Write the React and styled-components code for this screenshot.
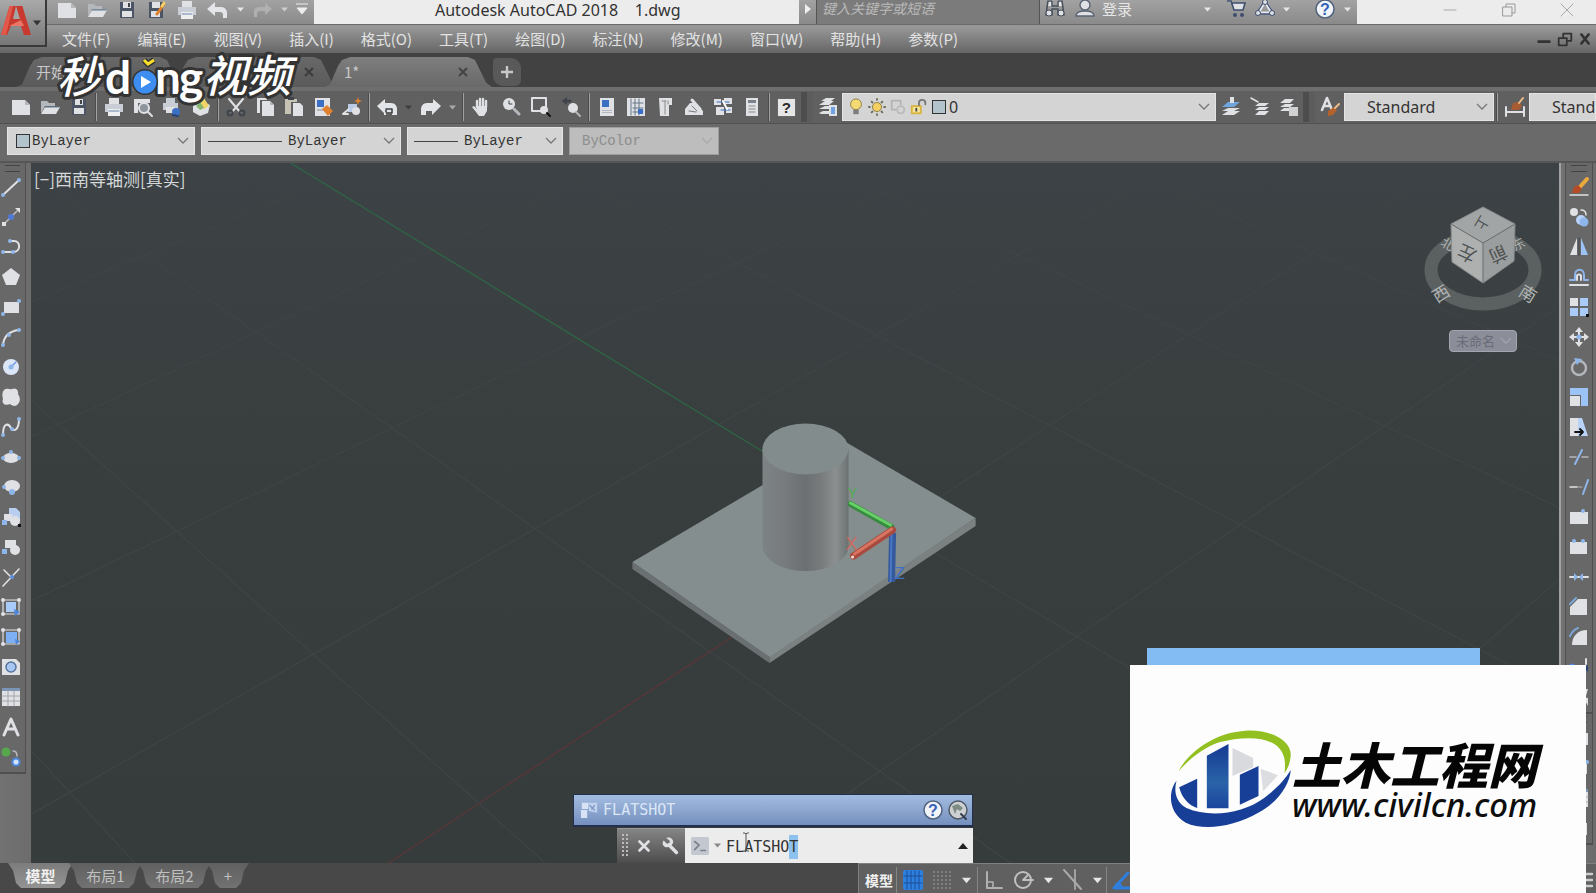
import React, { useEffect, useRef } from 'react';
import styled, { createGlobalStyle } from 'styled-components';

const SANS = '"Noto Sans", "Noto Sans CJK SC", sans-serif';
const CJK = '"Noto Sans CJK SC", sans-serif';
const MONO = '"Liberation Mono", monospace';

const Global = createGlobalStyle`
  * { box-sizing: border-box; }
  body { margin: 0; background: #484848; font-family: ${CJK}; }
  button, input, select { font: inherit; color: inherit; margin: 0; padding: 0; border: 0; background: none; outline: none; }
`;

/* ---------- palette for icons ---------- */
const L = '#dfe1e4';
const G = '#b4b7bb';
const B = '#8fb6ea';
const D = '#3f444b';
const BB = '#3b6fc4';
const O = '#e0812f';
const Y = '#f2d36a';

const S = ({ d, c = L, w = 2, f = 'none' }) => (
  <path d={d} stroke={c} strokeWidth={w} fill={f} strokeLinecap="round" strokeLinejoin="round" />
);
const F = ({ d, c = L }) => <path d={d} fill={c} />;
const Dot = ({ x, y, r = 2, c = B }) => <circle cx={x} cy={y} r={r} fill={c} />;

const ICONS = {
  new: <><F d="M1 3h13l5 5v10H1z" /><F d="M14 3v5h5z" c={G} /></>,
  open: <><F d="M1 4h6l2 2h6v3H5l-4 7z" c={G} /><F d="M5 10h15l-4 7H1z" /><S d="M5 10h14" c="#5f7a94" w={1} /></>,
  save: <><F d="M3 2h14v16H3z" c="#4b5565" /><F d="M6 2h8v6H6z" /><F d="M5 11h10v6H5z" c={L} /><F d="M11 3h2v4h-2z" c={D} /></>,
  saveas: <><F d="M2 2h14v16H2z" c="#4b5565" /><F d="M5 2h8v6H5z" /><F d="M4 11h9v6H4z" /><S d="M17 4l-7 10" c={O} w={3} /><S d="M17 3l-2 3" c={Y} w={3} /></>,
  print: <><F d="M5 1h10v6H5z" /><F d="M1 7h18v8H1z" c="#c9ced6" /><F d="M4 12h12v7H4z" c="#eceef0" /><S d="M5 14h10" c="#6682a8" w={1} /></>,
  preview: <><F d="M1 2h16v4H1zM1 6h4v10H1z" /><circle cx="11" cy="11" r="5" fill="#8e959d" stroke={L} strokeWidth="2" /><S d="M15 15l4 4" /></>,
  publish: <><F d="M4 1h9v5H4zM1 6h15v7H1z" c="#c9ced6" /><F d="M4 10h9v6H4z" /><Dot x={14} y={15} r={4} c={BB} /><S d="M11 18l5 1" c="#24427c" /></>,
  dwf: <><F d="M2 9l8-5 9 4-2 8-8 3-7-4z" /><F d="M7 5l6-4 5 8-5 3z" c={Y} /><F d="M5 9l4-4 4 6-4 2z" c="#86b76d" /></>,
  cut: <><S d="M3 2l11 13M17 2L6 15" c={L} /><S d="M3 2l6 7M17 2l-6 7" c={L} w={1} /><circle cx="4" cy="16" r="2.5" fill="none" stroke={D} strokeWidth="2" /><circle cx="16" cy="16" r="2.5" fill="none" stroke={D} strokeWidth="2" /></>,
  copy: <><F d="M2 1h10v2H5v13H2z" /><F d="M7 4h8l4 4v11H7z" /><F d="M15 4v4h4z" c={G} /></>,
  paste: <><F d="M1 2h12v3H7v12H1z" c="#c6c2b4" /><F d="M4 0h6v3H4z" c={D} /><F d="M9 6h7l3 3v10H9z" /></>,
  match: <><F d="M2 1h15v18H2z" /><F d="M4 3h7v7H4z" c={BB} /><F d="M4 12h11v2H4z" c={G} /><F d="M9 12l5-4 6 6-5 5z" c={O} /></>,
  block: <><F d="M6 7h9v8H6z" c="#b8cae8" /><S d="M1 17l6-5M1 17h5" c={L} /><Dot x={14} y={14} r={4} c={L} /><F d="M16 0l1 3 3 1-3 1-1 3-1-3-3-1 3-1z" c={O} /></>,
  undo: <F d="M8 2v5h6c4 0 6 3 6 6v5h-4v-3c0-2-1-3-3-3H8v4L0 9z" c="#e3e5e8" />,
  undoDark: <><F d="M8 2v4h6c4 0 6 3 6 6v6h-5v-3h-6v3H7v-2L0 9z" c="#e3e5e8" /><S d="M9 12h6M15 12v4M9 13v2" c={D} w={1.6} /></>,
  redo: <F d="M12 2v4H6C1 6 0 10 0 13v5h5v-4h6v4l9-9z" c="#e3e5e8" />,
  redoDim: <F d="M12 3v4H6c-4 0-5 3-5 5v5h3v-3c0-2 1-3 3-3h5v4l7-6z" c="#b0b0b0" />,
  pan: <><S d="M6 10V4M9 9V2M12 9V2M15 10V4" w={2.4} /><F d="M5 9h11v5l-3 5H8l-3-4-4-5 2-1 3 3z" /></>,
  zoomrt: <><circle cx="8" cy="7" r="6" fill={L} /><S d="M8 4v3h3" c={D} w={1} /><S d="M13 12l5 5" c={G} w={3} /></>,
  zoomwin: <><S d="M1 1h14v13H1z" c={L} w={2} /><Dot x={13} y={13} r={4} c={L} /><S d="M16 16l3 3" c="#111" /></>,
  zoomprev: <><S d="M3 4h6" c={D} w={3} /><F d="M1 4l5-4v8z" c={D} /><Dot x={12} y={11} r={5} c={L} /><S d="M15 15l4 4" c={G} /></>,
  props: <><F d="M3 1h14v18H3z" /><F d="M5 3h7v7H5z" c={BB} /><F d="M5 13h10v1H5zM5 15h10v1H5z" c={G} /></>,
  center: <><F d="M1 1h18v18H1z" /><S d="M5 2v16M9 2v16M13 2v16M7 6h10M7 11h10M7 15h10" c="#66758a" w={1} /><F d="M12 12h5v5h-5z" c={BB} /></>,
  palette: <><F d="M4 1h13v7h-3v11H5z" /><S d="M10 4v13M13 4v3M7 4h4" c="#888" w={1} /></>,
  sheet: <><F d="M1 12l5-6h5l8 8v4H1z" /><S d="M8 3l8 9" c={L} w={3} /><S d="M5 14l7 1M8 9l5 5" c="#777" w={1} /></>,
  markup: <><F d="M1 2h7v6H1zM11 1h8v6h-8zM3 10h8v8H3zM13 10h6v6h-6z" /><S d="M4 5h12M8 13h9" c={BB} w={1} /><S d="M10 4l4 8" c="#fff" w={2} /></>,
  calc: <><F d="M4 1h12v18H4z" /><F d="M6 3h8v3H6z" c="#7a828c" /><S d="M7 9h6M7 12h6M7 15h6" c="#888" w={1} /></>,
  layers: <><F d="M1 8l6-4h9l-5 4zM1 12l6-3h9l-5 3z" /><F d="M3 4l5-3h9l-4 3zM1 16l4-2h6v3H3z" /><F d="M11 8h8v11h-8z" c={L} /><F d="M13 10h4v7h-4z" c="#6fa3e4" /></>,
  layerA: <><F d="M1 18l6-4h12l-6 4zM1 14l6-3h12l-6 3z" /><F d="M1 10l6-5h12l-6 5z" c="#6ea5dd" /><F d="M9 0h4v6H9z" /></>,
  layerB: <><F d="M5 9l4-3h10l-4 3zM5 13l4-3h10l-4 3zM5 18l4-4h10l-4 4z" /><S d="M1 1l7 4" c={L} w={1.5} /></>,
  layerC: <><F d="M1 6l5-4h9l-4 4zM1 10l5-3h9l-4 3zM1 14l4-3h7v3z" /><F d="M10 10h9v9h-9z" c="#cfd1d3" /></>,
  textStyle: <><S d="M2 13L7 1l5 12M4 9h6" c={L} w={2.5} /><F d="M8 14l6-4 3 3-4 5-5 1z" c="#b4622c" /><S d="M15 11l4-4" c="#f0bc86" w={2} /></>,
  dimStyle: <><S d="M1 10v9M19 10v9M1 15h18" c={L} w={2} /><F d="M6 13l2-7 6-1 3 4-3 4z" c="#a85a30" /><S d="M14 6l4-5" c="#f0bc86" w={2} /></>,
  bulb: <><circle cx="10" cy="7" r="6" fill="#f4da74" stroke="#8a7a3c" /><F d="M7 13h6v5H7z" c="#7d7d7d" /></>,
  sun: <><circle cx="10" cy="10" r="5" fill="#f4cf62" stroke="#8a7a3c" /><S d="M10 1v1M10 18v1M1 10h1M18 10h1M4 4l1 1M15 15l1 1M4 16l1-1M15 5l1-1" c="#6b6b52" w={2} /></>,
  freeze: <><S d="M3 3h10v4M3 3v10h4" c="#b4b4b4" w={2} /><circle cx="13" cy="13" r="4" fill="none" stroke="#b9b9b9" strokeWidth="2" /></>,
  lock: <><F d="M1 8h12v10H1z" c="#d9b33c" /><F d="M3 10h8v6H3z" c="#f5e59b" /><S d="M10 8V5c0-4 7-4 7 0v2" c="#777" w={2} /><F d="M6 11h2v4H6z" c="#444" /></>,
  binoc: <><F d="M3 1h5v6H3zM12 1h5v6h-5z" c="#e8e8e8" /><S d="M3 2h4v5h6V2h4l2 14h-6v-6H7v6H1z" c="#47505c" w={1.6} /><circle cx="4" cy="14" r="3" fill={L} stroke="#47505c" /><circle cx="16" cy="14" r="3" fill={L} stroke="#47505c" /></>,
  user: <><circle cx="10" cy="6" r="5" fill={L} stroke="#5a6473" strokeWidth="1.4" /><path d="M1 17c0-4 5-5 9-5s9 1 9 5z" fill={L} stroke="#5a6473" strokeWidth="1.4" /></>,
  cart: <><path d="M1 2h4l3 9h9l2-7H6" fill={L} stroke="#3f4e70" strokeWidth="1.6" /><Dot x={9} y={16} c="#3f4e70" /><Dot x={16} y={16} c="#3f4e70" /></>,
  a360: <><path d="M10 2l7 12H3z" fill="none" stroke="#e7ebf2" strokeWidth="3" /><path d="M10 1l9 14H1z" fill="none" stroke="#3f4e70" strokeWidth="1.3" /><circle cx="10" cy="3" r="2.5" fill={L} stroke="#3f4e70" /><circle cx="3" cy="14" r="2.5" fill={L} stroke="#3f4e70" /><circle cx="17" cy="14" r="2.5" fill={L} stroke="#3f4e70" /></>,
  winMin: <S d="M4 10h12" c="#aaa" w={1} />,
  winRestore: <S d="M4 7h9v9H4zM7 7V4h9v9h-3" c="#999" w={1} />,
  winClose: <S d="M4 4l12 12M16 4L4 16" c="#aaa" w={1} />,
  docMin: <S d="M4 13h12" c="#333" w={3} />,
  docRestore: <S d="M3 9h9v8H3zM8 8V4h9v8h-4" c="#333" w={2} />,
  docClose: <S d="M6 5l8 10M14 5L6 15" c="#333" w={3} />,
  line: <><S d="M2 18L18 3" c={L} w={2} /><Dot x={2} y={18} /><Dot x={18} y={3} /></>,
  xline: <><S d="M4 16L16 4" c={G} w={1.6} /><F d="M1 15h4v4H1zM14 1h5v5z" /><Dot x={10} y={10} r={3} c="#4f79d6" /></>,
  pline: <><S d="M2 15h10c8 0 8-11 1-11h-3" c={L} w={2} /><Dot x={2} y={15} /><Dot x={12} y={15} /><Dot x={9} y={4} /></>,
  polygon: <F d="M10 1l9 7-4 10H5L1 8z" />,
  rect: <><F d="M3 5h15v11H3z" /><Dot x={18} y={4} /><Dot x={2} y={17} /></>,
  arc: <><S d="M2 18C3 8 9 4 18 3" c={L} w={2} /><Dot x={2} y={18} /><Dot x={8} y={8} /><Dot x={18} y={3} /></>,
  circle: <><Dot x={10} y={10} r={8} c="#dbe6f8" /><S d="M10 10l5-5" c="#6f9ae0" w={1.5} /><Dot x={10} y={10} r={2.5} c={B} /></>,
  cloud: <F d="M3 3c3-3 6 0 8-1 4-2 7 2 6 5 2 3 3 7 0 10-2 3-6 2-8 0-4 2-9 0-7-5-1-3-1-7 1-9z" />,
  spline: <><S d="M2 18C2 4 8 7 10 11s8 3 8-9" c={L} w={2} /><Dot x={2} y={18} /><Dot x={18} y={2} /><Dot x={11} y={12} /></>,
  ellipse: <><ellipse cx="10" cy="11" rx="8" ry="5" fill={L} /><Dot x={10} y={5} /><Dot x={2} y={11} /><Dot x={18} y={11} /></>,
  ellArc: <><ellipse cx="11" cy="9" rx="8" ry="6" fill={L} /><Dot x={3} y={10} /><Dot x={11} y={15} r={3} /></>,
  insert: <><F d="M8 1h7l4 4v9H8z" c="#b9cdf0" /><F d="M3 7h8v7H3z" /><Dot x={14} y={14} r={5} c={L} /><F d="M1 13h5v5H1z" c={B} /><F d="M17 17h3v3h-3z" c="#111" /></>,
  mkblock: <><F d="M4 3h11v8H4z" /><Dot x={14} y={13} r={5} c={L} /><F d="M1 12h5v5H1z" c={B} /></>,
  point: <><S d="M2 19L18 2M3 3l8 8" c={L} w={1.6} /><Dot x={11} y={10} r={2} c="#5d8de0" /></>,
  hatch: <><S d="M2 3h16v14H2z" c={L} w={1.2} /><F d="M5 5h10v10H5z" c="#a9cbfa" /><Dot x={2} y={3} c={L} /><Dot x={18} y={3} c={L} /><Dot x={2} y={17} c={L} /><F d="M13 12l6 3-5 4z" c="#4f86dd" /></>,
  grad: <><S d="M2 3h16v14H2z" c={L} w={1.2} /><F d="M5 5h11v11H5z" c="#7eb0f5" /><Dot x={2} y={3} c={L} /><Dot x={18} y={3} c={L} /><Dot x={2} y={17} c={L} /><F d="M14 12l5 2-4 4z" c="#4f86dd" /></>,
  region: <><F d="M1 2h14l4 4v12H1z" /><circle cx="10" cy="10" r="5" fill="#a8c6f2" stroke="#55749f" strokeWidth="1.5" /></>,
  table: <><F d="M1 1h18v18H1z" /><F d="M1 1h18v3H1z" c="#7d95b5" /><S d="M7 4v15M13 4v15M1 9h18M1 14h18" c="#a3a6aa" w={1} /></>,
  mtext: <S d="M3 18L10 2l7 16M6 12h8" c={L} w={3} />,
  addsel: <><Dot x={5} y={5} r={4.5} c="#57a84c" /><S d="M12 4c4 0 4 3 4 5" c={G} w={1.6} /><Dot x={15} y={15} r={4.5} c="#4f86dd" /><Dot x={15} y={15} r={2.6} c="#cfe2ff" /></>,
  erase: <><S d="M1 18h18" c={L} w={1.4} /><S d="M18 2l-8 9" c="#e9a93c" w={4} /><F d="M3 16l2-6 4-2 4 4-3 4z" c="#b44b26" /></>,
  copyObj: <><Dot x={5} y={5} r={4} c={L} /><S d="M12 3c4 0 5 2 5 5" c={L} w={1.5} /><Dot x={12} y={13} r={5} c="#b8d2fa" /><Dot x={15} y={15} r={4.5} c={B} /></>,
  mirror: <><F d="M8 1v17H1z" /><F d="M12 1v17h7z" c="#9cc3f5" /><S d="M10 1v18" c={D} w={1} /></>,
  offset: <><S d="M1 13h5V8c0-7 9-7 9 0v5h4" c={B} w={2} /><S d="M1 18h18M8 13V9c0-2 4-2 4 0v4" c={L} w={2} /></>,
  array: <><F d="M1 1h8v8H1z" /><F d="M11 1h8v8h-8zM1 11h8v8H1zM11 11h8v8h-8z" c="#a9cbfa" /><F d="M17 17h3v3h-3z" c="#111" /></>,
  move: <><F d="M10 0l4 5H6zM10 20l4-5H6zM0 10l5-4v8zM20 10l-5-4v8z" /><S d="M10 5v10M5 10h10" c={L} /><Dot x={10} y={10} r={2.5} c={B} /></>,
  rotate: <><circle cx="10" cy="11" r="7" fill="none" stroke={G} strokeWidth="2.4" /><F d="M5 1l8 1-5 6z" c={B} /></>,
  scale: <><F d="M1 1h18v18h-7V8H1z" c="#9cc3f5" /><F d="M1 9h10v10H1z" /></>,
  stretch: <><F d="M1 1h8v18H1z" /><F d="M9 1h4l6 18H9z" c="#b9d3f6" /><S d="M6 15h7M11 12l3 3-3 3" c="#111" w={1.8} /></>,
  trim: <><S d="M1 10h6M13 10h6" c={G} w={1.5} /><S d="M6 17L13 3" c={B} w={2} /></>,
  extend: <><S d="M1 10h7" c={L} w={1.5} /><S d="M9 10h4" c={G} w={1} /><S d="M14 17l5-14" c={B} w={2} /></>,
  breakPt: <><F d="M1 5h18v12H1z" /><Dot x={14} y={4} /></>,
  breakObj: <><F d="M1 5h17v12H1z" /><Dot x={5} y={4} /><Dot x={14} y={4} /></>,
  join: <><S d="M1 10h18" c={L} w={2} /><F d="M5 6l4 4-4 4zM14 6l-4 4 4 4z" c={B} /></>,
  chamfer: <><F d="M9 2h9v16H1v-8z" /><S d="M1 7l6-6" c="#7ba6d8" w={2} /></>,
  fillet: <><F d="M18 3v15H3C3 9 9 3 18 3z" /><S d="M1 9C3 5 6 2 9 1" c="#7ba6d8" w={2} /></>,
  blend: <><S d="M2 8c6 0 7 8 14 5" c="#4f86dd" w={3} /><S d="M17 2v5" c={L} w={2} /><F d="M15 11l4-3v7z" c="#26456f" /></>,
  explode: <><F d="M1 4h7v7H1zM11 2h8l-2 7-6-1zM4 13h7v6H4z" /><F d="M14 10l5 1v8z" c={L} /></>,
  wrench: <><S d="M8 8l9 9" c={L} w={4} /><path d="M2 3l4 4 3-1 0-3-4-3c5-2 9 2 8 6l-3 4-4 1C2 11-1 7 2 3z" fill={L} /></>,
  closeX: <S d="M5 5l10 10M15 5L5 15" c={L} w={3} />,
  prompt: <><rect x="0" y="0" width="20" height="20" rx="2" fill="#c3c7cf" /><S d="M4 5l5 4-5 5M11 15h5" c="#7a7f8a" w={1.8} /></>,
  search: <><circle cx="10" cy="10" r="9" fill="#ccd0d2" stroke="#4d5560" strokeWidth="1.4" /><path d="M4 6l6-2 5 4-3 3-3-2-2 5z" fill="#7e8b83" /><S d="M13 14l5 5" c="#333c48" w={2} /></>,
  flat: <><F d="M2 2h7v7H2zM1 10h7v9H1z" c="#d7e2f4" /><F d="M9 2h10v11l-9-2z" c="#c0d2ef" /><S d="M11 5l5 5M16 5l-3 4" c="#7f97c2" w={1.4} /></>,
  grid: <><rect width="20" height="20" fill="#2d7fe0" rx="2" /><S d="M4 1v18M8 1v18M12 1v18M16 1v18M1 6h18M1 13h18" c="#1c4f96" w={1} /></>,
  snap: <S d="M2 2h.1M6 2h.1M10 2h.1M14 2h.1M18 2h.1M2 6h.1M6 6h.1M10 6h.1M14 6h.1M18 6h.1M2 10h.1M6 10h.1M10 10h.1M14 10h.1M18 10h.1M2 14h.1M6 14h.1M10 14h.1M14 14h.1M18 14h.1M2 18h.1M6 18h.1M10 18h.1M14 18h.1M18 18h.1" c="#a2a2a2" w={1.6} />,
  ortho: <><S d="M3 2v16h15" c="#b0b0b0" w={2} /><S d="M3 12h6v6" c="#b0b0b0" w={1.6} /></>,
  polar: <><circle cx="9" cy="10" r="8" fill="none" stroke="#c0c0c0" strokeWidth="2" /><S d="M9 10h10M9 10l5-5" c="#c0c0c0" w={1.8} /></>,
  iso: <><S d="M1 0l17 19" c="#aaa" w={2} /><S d="M12 0v19" c="#aaa" w={1.8} /></>,
  osnap: <S d="M1 18h18M1 18L15 3M4 14c3 0 4 1 4 4" c="#2d7fe0" w={3} />,
  menu: <S d="M2 4h16M2 10h16M2 16h16" c="#ccc" w={2.4} />,
};

const Svg = styled.svg`
  display: block;
  flex: none;
  width: ${(p) => p.$size || 20}px;
  height: ${(p) => p.$size || 20}px;
  overflow: visible;
`;
const Icon = ({ name, size }) => (
  <Svg viewBox="0 0 20 20" $size={size} aria-hidden="true">{ICONS[name]}</Svg>
);

const Help = ({ size = 20, square }) => (
  <Svg viewBox="0 0 20 20" $size={size} aria-hidden="true">
    {square
      ? <rect x="1" y="1" width="18" height="18" fill="#e6e6e6" />
      : <circle cx="10" cy="10" r="9" fill="#f1f4f8" stroke="#51637e" strokeWidth="1.5" />}
    <text x="10" y="16" textAnchor="middle" fontFamily="Liberation Sans, sans-serif" fontWeight="700" fontSize="16" fill={square ? '#2a2a2a' : '#3563b5'}>?</text>
  </Svg>
);

/* ---------- shell ---------- */
const Shell = styled.div`
  position: relative;
  display: flex;
  flex-direction: column;
  min-height: 100vh;
  overflow: hidden;
  background: #6a6a6a;
`;

const Header = styled.header`
  display: flex;
  height: 53px;
  background: linear-gradient(#a0a0a0 0, #8f8f8f 25px, #999 26px, #666 53px);
`;
const AppButton = styled.button`
  display: flex;
  align-items: center;
  flex: none;
  width: 47px;
  height: 47px;
  background: linear-gradient(#a9a9a9, #777);
  border-right: 2px solid #3a3a3a;
  border-bottom: 2px solid #3a3a3a;
`;
const HeaderRows = styled.div`
  flex: 1;
  min-width: 0;
`;
const TitleRow = styled.div`
  display: flex;
  height: 25px;
  border-bottom: 1px solid #6c6c6c;
  background: linear-gradient(#a2a2a2, #8a8a8a);
`;
const Quick = styled.div`
  display: flex;
  flex: none;
  width: 267px;
  height: 18px;
  padding-left: 5px;
`;
const TitleText = styled.h1`
  flex: 1;
  margin: 0;
  padding-left: 121px;
  background: #ececec;
  color: #333;
  font: 400 16px/20px ${SANS};
  white-space: pre;
`;
const SearchArrow = styled.button`
  display: grid;
  place-items: start center;
  padding-top: 4px;
  width: 17px;
`;
const SearchBox = styled.input`
  width: 224px;
  padding: 0 5px 8px;
  background: #7b7b7b;
  border: solid #555;
  border-width: 0 1px;
  font: italic 14px/18px ${CJK};
  &::placeholder { color: #b9b9b9; opacity: 1; }
`;
const InfoCenter = styled.div`
  display: flex;
  align-items: center;
  width: 317px;
  height: 18px;
  padding-left: 5px;
`;
const SignIn = styled.button`
  display: flex;
  align-items: center;
  gap: 7px;
  margin-left: 10px;
  color: #e6e6e6;
  font: 15px/18px ${CJK};
`;
const Spacer = styled.div`
  flex: ${(p) => (p.$w ? `0 0 ${p.$w}px` : '1')};
`;
const WindowButtons = styled.div`
  display: flex;
  justify-content: space-between;
  width: 239px;
  padding: 0 18px 7px 82px;
  background: #ececec;
`;
const MenuBar = styled.nav`
  display: flex;
  align-items: center;
  gap: 27px;
  height: 28px;
  padding-left: 15px;
  padding-right: 2px;
`;
const MenuItem = styled.button`
  color: #e2e2e2;
  font: 15px/24px ${CJK};
  white-space: nowrap;
`;
const DocButtons = styled.div`
  display: flex;
  gap: 1px;
  margin-left: auto;
`;

const IconButton = styled.button`
  display: grid;
  place-items: center;
  flex: none;
  width: ${(p) => p.$w || 29}px;
  height: ${(p) => p.$h || 'auto'};
`;

/* ---------- file tabs ---------- */
const TabStrip = styled.div`
  display: flex;
  align-items: flex-end;
  height: 34px;
  padding-left: 16px;
  background: #424242;
`;
const FileTab = styled.div`
  display: flex;
  align-items: center;
  justify-content: space-between;
  width: 168px;
  height: 30px;
  margin-right: -14px;
  padding: 0 24px 0 20px;
  color: #c8c8c8;
  background: linear-gradient(${(p) => (p.$active ? '#7e7e7e, #696969' : '#686868, #5a5a5a')});
  clip-path: polygon(0 100%, 6px 92%, 14px 30%, 18px 10%, 26px 0, calc(100% - 24px) 0, calc(100% - 17px) 10%, calc(100% - 6px) 85%, 100% 100%);
  & > button { font: 15px/30px ${CJK}; }
`;
const AddTab = styled.button`
  display: grid;
  place-items: center;
  width: 28px;
  height: 28px;
  margin: 0 0 1px 15px;
  background: #595959;
  border-radius: 4px 10px 6px 10px;
`;

/* ---------- toolbars ---------- */
const ToolRow = styled.div`
  display: flex;
  align-items: center;
  height: 37px;
  padding: 2px 0 2px 6px;
  background: #606060;
  border-top: 4px solid #6e6e6e;
  border-bottom: 1px solid #505050;
`;
const PropRow = styled.div`
  display: flex;
  align-items: flex-start;
  gap: 6px;
  height: 39px;
  padding: 3px 7px;
  background: #6a6a6a;
  border-bottom: 2px solid #565656;
`;
const Sep = styled.span`
  flex: none;
  width: 6px;
  height: 28px;
  border: solid transparent;
  border-width: 0 2px;
  background: linear-gradient(90deg, #4c4c4c 1px, #a0a0a0 1px) padding-box;
`;
const Grip = styled.span`
  flex: none;
  width: ${(p) => p.$w}px;
  height: 30px;
  background: #4d4d4d;
  border-right: 6px solid #5c5c5c;
`;
const ComboBox = styled.label`
  display: flex;
  align-items: center;
  flex: ${(p) => (p.$grow ? '1 1 0' : `0 0 ${p.$w}px`)};
  min-width: 0;
  height: 28px;
  padding: 0 6px 0 ${(p) => p.$pad || 6}px;
  overflow: hidden;
  background: ${(p) => (p.$off ? '#bdbdbd' : '#d4d4d4')};
  border: 1px solid ${(p) => (p.$off ? '#9d9d9d' : '#e4e4e4')};
  color: ${(p) => (p.$off ? '#8e8e8e' : '#333')};
  font: ${(p) => (p.$sans ? `16px/26px ${SANS}` : `14px/26px ${MONO}`)};
`;
const Select = styled.select`
  appearance: none;
  flex: 1 0 ${(p) => p.$min || 20}px;
  opacity: 1;
  &:disabled { color: inherit; opacity: 1; }
`;
const LineSample = styled.span`
  flex: none;
  width: ${(p) => p.$w}px;
  height: 1px;
  margin-right: 6px;
  background: #444;
`;
const Swatch = styled.span`
  flex: none;
  width: 14px;
  height: 14px;
  margin: 0 ${(p) => p.$gap || 2}px;
  background: #b3c3cc;
  border: 1px solid #333;
`;
const LayerState = styled.span`
  display: flex;
  flex: none;
  gap: 3px;
  margin-right: 1px;
`;
const Chevron = ({ c = '#888' }) => (
  <Svg viewBox="0 0 10 10" $size={10} aria-hidden="true"><path d="M0 2l5 5 5-5" fill="none" stroke={c} strokeWidth="1.3" /></Svg>
);
const Tri = ({ c = '#e8e8e8', up, size = 9 }) => (
  <Svg viewBox="0 0 10 10" $size={size} aria-hidden="true"><path d={up ? 'M0 8h10L5 2z' : 'M0 2h10L5 8z'} fill={c} /></Svg>
);

const Combo = ({ label, value, children, arrow = true, min, ...rest }) => (
  <ComboBox {...rest}>
    {children}
    <Select aria-label={label} defaultValue={value} disabled={rest.$off} $min={min}>
      <option>{value}</option>
    </Select>
    {arrow && <Chevron c={rest.$off ? '#aaa' : '#777'} />}
  </ComboBox>
);

/* ---------- work area ---------- */
const Work = styled.main`
  display: flex;
  flex: 1;
  min-height: 0;
`;
const Dock = styled.aside`
  flex: none;
  width: ${(p) => (p.$right ? 35 : 31)}px;
  padding: 0 ${(p) => (p.$right ? '3px 0 4px' : '5px 0 0')};
  background: linear-gradient(90deg, #727272, #6c6c6c);
`;
const DockBar = styled.div`
  display: flex;
  flex-direction: column;
  background: #686868;
  border: solid #505050;
  border-width: 0 1px 2px ${(p) => (p.$right ? 1 : 0)}px;
  &::before {
    content: '';
    height: 5px;
    margin: 2px 5px 0;
    border: solid #444;
    border-width: 1px 0;
  }
`;
const Viewport = styled.section`
  position: relative;
  flex: 1;
  min-width: 0;
  background: linear-gradient(#3d4246, #383d3d 45%, #363b3b);
  border-right: 2px solid #a2a2a4;
`;
const Scene = styled.svg`
  position: absolute;
  inset: 0;
  width: 100%;
  height: 100%;
`;
const ViewLabel = styled.button`
  position: relative;
  margin: 4px 0 0 3px;
  color: #d4d8d8;
  font: 17px/24px ${CJK};
`;
const CubeBox = styled.div`
  position: absolute;
  top: 36px;
  right: 13px;
  display: flex;
  flex-direction: column;
  align-items: center;
`;
const UcsButton = styled.button`
  display: flex;
  align-items: center;
  justify-content: space-between;
  width: 68px;
  height: 22px;
  margin-top: 10px;
  padding: 0 5px 0 6px;
  border: 1px solid #a3a5b0;
  border-radius: 4px;
  background: #8b8d99;
  color: #696c78;
  font: 13px/18px ${CJK};
`;

const Command = styled.div`
  position: absolute;
  left: 36%;
  bottom: 0;
  width: 400px;
  margin-left: -8px;
`;
const Suggestion = styled.div`
  display: flex;
  align-items: center;
  gap: 5px;
  height: 33px;
  margin-bottom: 1px;
  padding: 0 4px 0 6px;
  border: 1px solid #22304e;
  border-bottom-width: 2px;
  background: linear-gradient(#a3bce0, #7590bf);
  color: #dbe6f5;
  font: 15px/30px "DejaVu Sans Mono", monospace;
`;
const Prompt = styled.div`
  display: flex;
  height: 35px;
  margin-left: 44px;
`;
const PromptTools = styled.div`
  display: flex;
  align-items: center;
  justify-content: space-between;
  width: 68px;
  padding: 0 5px;
  background: linear-gradient(#858585, #4c4c4c);
  border-top: 1px solid #999;
`;
const DragDots = styled.svg`
  width: 6px;
  height: 24px;
`;
const PromptField = styled.div`
  position: relative;
  display: flex;
  align-items: center;
  gap: 5px;
  flex: 1;
  padding: 0 5px 0 6px;
  background: #ececec;
`;
const PromptInput = styled.input`
  flex: 1;
  min-width: 0;
  padding-top: 2px;
  color: #333;
  font: 15px/24px "DejaVu Sans Mono", monospace;
  &::selection { background: #8ec2ee; color: #333; }
`;
const IBeam = styled.svg`
  position: absolute;
  left: 57px;
  top: 4px;
  width: 8px;
  height: 20px;
`;

/* ---------- bottom bar ---------- */
const Bottom = styled.footer`
  display: flex;
  height: 30px;
  background: #484848;
`;
const Layouts = styled.div`
  display: flex;
  flex: 1;
  padding-left: 8px;
`;
const LayoutTab = styled.button`
  flex: none;
  width: ${(p) => p.$w || 73}px;
  height: 25px;
  margin-right: -4px;
  color: ${(p) => (p.$active ? '#f0f0f0' : '#c0c0c0')};
  background: linear-gradient(${(p) => (p.$active ? '#7c7c7c, #949494' : '#606060, #727272')});
  clip-path: polygon(0 0, 100% 0, calc(100% - 5px) 30%, calc(100% - 8px) 80%, calc(100% - 13px) 100%, 13px 100%, 8px 80%, 5px 30%);
  font: ${(p) => (p.$active ? 700 : 400)} 15px/22px ${CJK};
`;
const Status = styled.div`
  display: flex;
  align-items: center;
  width: 738px;
  padding: 3px 0 0 4px;
  background: #606060;
  border-top: 1px solid #808080;
  border-left: 1px solid #808080;
`;
const ModelButton = styled.button`
  width: 32px;
  color: #f0f0f0;
  font: 700 14px/24px ${CJK};
  white-space: nowrap;
`;
const Rule = styled.span`
  width: 1px;
  height: 26px;
  margin: 0 1px;
  background: #858585;
`;

/* ---------- overlays ---------- */
const Watermark = styled.svg`
  position: absolute;
  left: 52px;
  top: 50px;
  width: 250px;
  height: 60px;
  pointer-events: none;
`;
const BlueStrip = styled.div`
  position: absolute;
  right: 116px;
  bottom: 228px;
  width: 333px;
  height: 17px;
  background: #83bbf3;
`;
const BrandCard = styled.div`
  position: absolute;
  right: 10px;
  bottom: 0;
  display: flex;
  align-items: center;
  width: 456px;
  height: 228px;
  padding-left: 41px;
  background: #fdfdfd;
`;
const BrandName = styled.strong`
  display: block;
  color: #050505;
  font: italic 900 49px/52px ${CJK};
  white-space: nowrap;
`;
const BrandUrl = styled.a`
  display: block;
  color: #0d0d0d;
  font: italic 500 33px/32px ${SANS};
  text-decoration: none;
  white-space: nowrap;
`;

const MENUS = ['文件(F)', '编辑(E)', '视图(V)', '插入(I)', '格式(O)', '工具(T)', '绘图(D)', '标注(N)', '修改(M)', '窗口(W)', '帮助(H)', '参数(P)'];
const DRAW = ['line', 'xline', 'pline', 'polygon', 'rect', 'arc', 'circle', 'cloud', 'spline', 'ellipse', 'ellArc', 'insert', 'mkblock', 'point', 'hatch', 'grad', 'region', 'table', 'mtext', 'addsel'];
const MODIFY = ['erase', 'copyObj', 'mirror', 'offset', 'array', 'move', 'rotate', 'scale', 'stretch', 'trim', 'extend', 'breakPt', 'breakObj', 'join', 'chamfer', 'fillet', 'blend', 'explode'];
const ORDER = ['breakPt', 'rect', 'table', 'breakObj'];
const STANDARD = [
  ['new', 'open', 'save'],
  ['print', 'preview', 'publish', 'dwf'],
  ['cut', 'copy', 'paste', 'match', 'block'],
];

const Buttons = ({ names, ...rest }) => names.map((n) => (
  <IconButton key={n} type="button" aria-label={n} {...rest}><Icon name={n} /></IconButton>
));

const GRID_LINES = [
  [31, 302, 370, 163], [31, 437, 620, 163], [31, 601, 945, 163], [31, 814, 1180, 163],
  [840, 562, 1450, 163], [745, 863, 1557, 307], [1200, 893, 1557, 580],
  [15, 163, 1010, 863], [31, 400, 545, 863], [31, 750, 135, 863], [762, 451, 1460, 863],
  [545, 163, 1557, 690], [820, 163, 1557, 507], [1110, 163, 1557, 360],
];

function Model() {
  return (
    <Scene viewBox="31 163 1527 700" preserveAspectRatio="xMidYMid slice" aria-hidden="true">
      <defs>
        <linearGradient id="side">
          <stop offset="0" stopColor="#7d8384" />
          <stop offset=".25" stopColor="#777b7d" />
          <stop offset=".5" stopColor="#6c7072" />
          <stop offset=".68" stopColor="#777b7c" />
          <stop offset=".85" stopColor="#8b8f90" />
          <stop offset=".95" stopColor="#777c7d" />
          <stop offset="1" stopColor="#6a6f70" />
        </linearGradient>
      </defs>
      <g stroke="#404647" strokeWidth="1">
        {GRID_LINES.map(([a, b, c, d]) => <line key={`${a}-${b}-${c}`} x1={a} y1={b} x2={c} y2={d} />)}
      </g>
      <line x1="290" y1="163" x2="763" y2="452" stroke="#2f6546" strokeWidth="1.3" />
      <line x1="733" y1="636" x2="388" y2="863" stroke="#5c3639" strokeWidth="1.2" />
      <polygon points="632,562 769,657 769,663 632,569" fill="#6a7071" />
      <polygon points="769,656 975,518 975,526 769,663" fill="#7b8181" />
      <polygon points="632,562 840,439 975,518 769,657" fill="#848e8e" />
      <path d="M762 449V546a43 25 0 0 0 86 0V449z" fill="url(#side)" />
      <ellipse cx="805" cy="449" rx="43" ry="25.5" fill="#828c8c" />
      <g strokeLinecap="round">
        <line x1="892" y1="533" x2="891" y2="582" stroke="#34599c" strokeWidth="7" strokeLinecap="butt" />
        <line x1="891" y1="533" x2="890" y2="582" stroke="#4a78c4" strokeWidth="2" strokeLinecap="butt" />
        <line x1="850" y1="504" x2="891" y2="527" stroke="#378b3e" strokeWidth="6" />
        <line x1="850" y1="503" x2="890" y2="525" stroke="#66cf66" strokeWidth="3" />
        <line x1="892" y1="530" x2="853" y2="556" stroke="#a84b3e" strokeWidth="7" />
        <line x1="891" y1="529" x2="854" y2="554" stroke="#d97463" strokeWidth="3" />
        <circle cx="852" cy="557" r="1.5" fill="#f6dcd6" />
      </g>
      <g fontFamily="Liberation Sans, sans-serif" fontSize="15">
        <text x="847" y="498" fill="#4fae50">Y</text>
        <text x="845" y="550" fontSize="18" fill="#c96b60">X</text>
        <text x="894" y="579" fill="#3d72c8" fontSize="17">Z</text>
      </g>
    </Scene>
  );
}

function ViewCube() {
  return (
    <svg width="126" height="121" viewBox="1420 199 126 121" aria-hidden="true">
      <ellipse cx="1483" cy="270" rx="52" ry="34" fill="none" stroke="#5b6061" strokeWidth="13" />
      <g fill="#b0b4b4" fontFamily="Noto Sans CJK SC, sans-serif" fontSize="17" textAnchor="middle">
        <text transform="rotate(28 1446 243)" x="1448" y="248" fontSize="13">北</text>
        <text transform="rotate(-28 1520 243)" x="1518" y="248" fontSize="13">东</text>
        <text transform="rotate(-32 1441 294)" x="1441" y="300">西</text>
        <text transform="rotate(32 1528 294)" x="1528" y="300">南</text>
      </g>
      <polygon points="1483,207 1515,224 1483,243 1451,224" fill="#a2a5a5" />
      <polygon points="1451,224 1483,243 1483,283 1452,262" fill="#aeb0b0" />
      <polygon points="1515,224 1483,243 1483,283 1514,261" fill="#9b9e9e" />
      <path d="M1451 224l32 19 32-19M1483 243v40" fill="none" stroke="#6a6d6d" strokeWidth="1" />
      <path d="M1483 207l32 17-1 37-31 22-31-21-1-38z" fill="none" stroke="#898c8c" strokeWidth="1" />
      <g fill="#4c5050" fontFamily="Noto Sans CJK SC, sans-serif" textAnchor="middle" fontSize="15">
        <text transform="rotate(120 1482 223)" x="1482" y="228" fontSize="14">上</text>
        <text transform="rotate(205 1467 253)" x="1467" y="259" fontSize="18">左</text>
        <text transform="rotate(155 1498 254)" x="1498" y="260" fontSize="18">前</text>
      </g>
    </svg>
  );
}

export default function App() {
  const input = useRef(null);
  useEffect(() => {
    input.current.focus({ preventScroll: true });
    input.current.setSelectionRange(7, 8);
  }, []);

  return (
    <Shell>
      <Global />
      <Header>
        <AppButton type="button" aria-label="Application menu">
          <svg width="33" height="34" viewBox="0 0 33 34" aria-hidden="true">
            <path d="M1 29L12-8h8l11 37h-7l-3-9H11L7 29z" fill="#c8392f" />
            <path d="M13 13l3-13 4 13z" fill="#a5a5a5" />
            <path d="M1 29L12-8h3L6 29z" fill="#e2594b" />
            <path d="M9 20l12-6 3 6z" fill="#ea7466" />
          </svg>
          <Tri c="#333" size={8} />
        </AppButton>
        <HeaderRows>
          <TitleRow>
            <Quick>
              <Buttons names={['new', 'open', 'save', 'saveas', 'print', 'undo']} $w={30} />
              <IconButton type="button" aria-label="Undo list" $w={16}><Tri size={7} /></IconButton>
              <IconButton type="button" aria-label="redo"><Icon name="redoDim" /></IconButton>
              <IconButton type="button" aria-label="Redo list" $w={14}><Tri c="#ccc" size={7} /></IconButton>
              <IconButton type="button" aria-label="Customize" $w={22}>
                <Svg viewBox="0 0 12 12" $size={12}><path d="M0 1h12M1 5h10l-5 6z" fill="#eee" stroke="#eee" /></Svg>
              </IconButton>
            </Quick>
            <TitleText>{'Autodesk AutoCAD 2018    1.dwg'}</TitleText>
            <SearchArrow type="button" aria-label="Toggle search">
              <Svg viewBox="0 0 10 10" $size={10}><path d="M2 0l6 5-6 5z" fill="#f0f0f0" /></Svg>
            </SearchArrow>
            <SearchBox aria-label="Search" placeholder="键入关键字或短语" />
            <InfoCenter>
              <IconButton type="button" aria-label="Find" $w={20}><Icon name="binoc" /></IconButton>
              <SignIn type="button"><Icon name="user" />登录</SignIn>
              <Spacer />
              <Tri size={7} />
              <Spacer $w={10} />
              <IconButton type="button" aria-label="Store"><Icon name="cart" /></IconButton>
              <IconButton type="button" aria-label="Apps"><Icon name="a360" /></IconButton>
              <Spacer $w={4} />
              <Tri size={7} />
              <Spacer $w={20} />
              <IconButton type="button" aria-label="Help"><Help /></IconButton>
              <Spacer $w={5} />
              <Tri size={7} />
              <Spacer $w={6} />
            </InfoCenter>
            <WindowButtons>
              <IconButton type="button" aria-label="Minimize" $w={22}><Icon name="winMin" /></IconButton>
              <IconButton type="button" aria-label="Restore" $w={22}><Icon name="winRestore" /></IconButton>
              <IconButton type="button" aria-label="Close" $w={22}><Icon name="winClose" /></IconButton>
            </WindowButtons>
          </TitleRow>
          <MenuBar>
            {MENUS.map((m) => <MenuItem key={m} type="button">{m}</MenuItem>)}
            <DocButtons>
              <IconButton type="button" aria-label="Minimize drawing" $w={20}><Icon name="docMin" size={18} /></IconButton>
              <IconButton type="button" aria-label="Restore drawing" $w={20}><Icon name="docRestore" size={18} /></IconButton>
              <IconButton type="button" aria-label="Close drawing" $w={18}><Icon name="docClose" size={18} /></IconButton>
            </DocButtons>
          </MenuBar>
        </HeaderRows>
      </Header>

      <TabStrip>
        <FileTab><button type="button">开始</button></FileTab>
        <FileTab>
          <span />
          <button type="button" aria-label="Close tab"><Svg viewBox="0 0 10 10" $size={10}><path d="M1 1l8 8M9 1L1 9" stroke="#3c3c3c" strokeWidth="2" /></Svg></button>
        </FileTab>
        <FileTab $active>
          <button type="button">1*</button>
          <button type="button" aria-label="Close tab"><Svg viewBox="0 0 10 10" $size={10}><path d="M1 1l8 8M9 1L1 9" stroke="#444" strokeWidth="2" /></Svg></button>
        </FileTab>
        <AddTab type="button" aria-label="New tab"><Svg viewBox="0 0 12 12" $size={12}><path d="M6 0v12M0 6h12" stroke="#c8c8c8" strokeWidth="2.4" /></Svg></AddTab>
      </TabStrip>

      <ToolRow>
        {STANDARD.map((g) => <React.Fragment key={g[0]}><Buttons names={g} /><Sep /></React.Fragment>)}
        <Buttons names={['undoDark']} />
        <IconButton type="button" aria-label="Undo list" $w={15}><Tri c="#3e3e3e" size={7} /></IconButton>
        <Buttons names={['redo']} />
        <IconButton type="button" aria-label="Redo list" $w={15}><Tri c="#aaa" size={7} /></IconButton>
        <Sep />
        <Buttons names={['pan', 'zoomrt', 'zoomwin', 'zoomprev']} $w={30} />
        <Sep />
        <Buttons names={['props', 'center', 'palette', 'sheet', 'markup', 'calc']} />
        <Sep />
        <IconButton type="button" aria-label="Help"><Help size={19} square /></IconButton>
        <Grip $w={12} />
        <Buttons names={['layers']} />
        <Combo label="Layer" value="0" $grow $sans $pad={4}>
          <LayerState>
            <Icon name="bulb" size={18} /><Icon name="sun" size={18} /><Icon name="freeze" size={18} /><Icon name="lock" size={18} />
          </LayerState>
          <Swatch $gap={3} />
        </Combo>
        <Buttons names={['layerA', 'layerB', 'layerC']} />
        <Grip $w={12} />
        <Buttons names={['textStyle']} />
        <Combo label="Text style" value="Standard" $sans $w={150} $pad={22} />
        <Sep />
        <Buttons names={['dimStyle']} />
        <Combo label="Dimension style" value="Standard" $sans $w={67} $pad={22} min={100} arrow={false} />
      </ToolRow>

      <PropRow>
        <Combo label="Color" value="ByLayer" $w={188}><Swatch /></Combo>
        <Combo label="Linetype" value="ByLayer" $w={200}><LineSample $w={74} /></Combo>
        <Combo label="Lineweight" value="ByLayer" $w={156}><LineSample $w={44} /></Combo>
        <Combo label="Plot style" value="ByColor" $w={150} $pad={12} $off />
      </PropRow>

      <Work>
        <Dock>
          <DockBar><Buttons names={DRAW} $w={22} $h="30px" /></DockBar>
        </Dock>
        <Viewport>
          <Model />
          <ViewLabel type="button">[−]西南等轴测[真实]</ViewLabel>
          <CubeBox>
            <ViewCube />
            <UcsButton type="button">未命名<Chevron c="#a0a2ad" /></UcsButton>
          </CubeBox>
          <Command>
            <Suggestion>
              <Icon name="flat" size={18} />FLATSHOT
              <Spacer />
              <IconButton type="button" aria-label="Help" $w={20}><Help /></IconButton>
              <IconButton type="button" aria-label="Search online" $w={20}><Icon name="search" /></IconButton>
            </Suggestion>
            <Prompt>
              <PromptTools>
                <DragDots viewBox="0 0 6 24" aria-hidden="true"><path d="M1 0v24M5 0v24" stroke="#bbb" strokeWidth="2" strokeDasharray="2 2" /></DragDots>
                <IconButton type="button" aria-label="Close command line" $w={20}><Icon name="closeX" size={18} /></IconButton>
                <IconButton type="button" aria-label="Customize command line" $w={20}><Icon name="wrench" size={17} /></IconButton>
              </PromptTools>
              <PromptField>
                <Icon name="prompt" size={18} />
                <Tri c="#888" size={7} />
                <PromptInput ref={input} aria-label="Command" defaultValue="FLATSHOT" spellCheck={false} />
                <IconButton type="button" aria-label="History" $w={10}><Tri c="#222" size={10} up /></IconButton>
                <IBeam viewBox="0 0 8 20" aria-hidden="true"><path d="M1 1h2l1 1 1-1h2M4 2v16M1 19h2l1-1 1 1h2" fill="none" stroke="#555" /></IBeam>
              </PromptField>
            </Prompt>
          </Command>
        </Viewport>
        <Dock $right>
          <DockBar $right><Buttons names={MODIFY} $w={26} $h="30px" /></DockBar>
          <DockBar $right><Buttons names={ORDER} $w={26} $h="30px" /></DockBar>
        </Dock>
      </Work>

      <Bottom>
        <Layouts>
          <LayoutTab type="button" $active $w={65}>模型</LayoutTab>
          <LayoutTab type="button">布局1</LayoutTab>
          <LayoutTab type="button">布局2</LayoutTab>
          <LayoutTab type="button" aria-label="New layout" $w={42}>+</LayoutTab>
        </Layouts>
        <Status>
          <ModelButton type="button">模型</ModelButton>
          <Rule />
          <Buttons names={['grid', 'snap']} />
          <IconButton type="button" aria-label="Snap settings" $w={20}><Tri /></IconButton>
          <Rule />
          <Buttons names={['ortho', 'polar']} $w={30} />
          <IconButton type="button" aria-label="Polar settings" $w={18}><Tri /></IconButton>
          <Buttons names={['iso']} $w={32} />
          <IconButton type="button" aria-label="Isometric settings" $w={16}><Tri /></IconButton>
          <Rule />
          <Buttons names={['osnap']} />
          <Spacer />
          <Buttons names={['menu']} $w={24} />
        </Status>
      </Bottom>

      <Watermark viewBox="52 50 250 60" role="img" aria-label="秒dǒng视频">
        <g fill="#fff" stroke="#333" strokeWidth="6" strokeLinejoin="round" paintOrder="stroke">
          <g fontFamily="Noto Sans CJK SC, sans-serif" fontWeight="500" fontStyle="italic" fontSize="44">
            <text x="57" y="93">秒</text>
            <text x="203" y="92">视频</text>
          </g>
          <g fontFamily="Lato, sans-serif" fontWeight="700" fontSize="46">
            <text x="105" y="94">d</text>
            <text x="155" y="94">n</text>
            <text x="179" y="94">g</text>
          </g>
        </g>
        <circle cx="145" cy="82" r="13" fill="#333" />
        <circle cx="145" cy="82" r="11.5" fill="#3d8ef0" />
        <path d="M141 76l10 6-10 6z" fill="#fff" />
        <path d="M144 60l4 4 6-4" fill="none" stroke="#333" strokeWidth="6" />
        <path d="M144 60l4 4 6-4" fill="none" stroke="#f8de2c" strokeWidth="3" />
      </Watermark>

      <BlueStrip />
      <BrandCard>
        <svg width="121" height="98" viewBox="216 268 362 294" aria-hidden="true">
          <defs>
            <linearGradient id="tower" x2="0" y2="1">
              <stop offset="0" stopColor="#153a92" />
              <stop offset=".6" stopColor="#2a63a8" />
              <stop offset="1" stopColor="#1a459c" />
            </linearGradient>
          </defs>
          <path d="M232 420C224 450 228 484 262 502C330 532 430 520 495 472C535 442 558 415 575 388C571 430 540 482 480 515C400 562 310 570 260 546C205 515 207 450 232 420z" fill="#173f97" />
          <path d="M238 392C270 330 350 275 440 270C530 266 582 310 574 350C572 370 565 385 556 398C560 365 558 335 530 313C490 285 420 290 360 305C310 322 265 360 238 392z" fill="#92c020" />
          <path d="M400 322l62 30v28l-62 26z" fill="#d9dadd" />
          <path d="M484 384l52 20-44 48z" fill="#dcdde0" />
          <path d="M323 345l65-35v193h-65z" fill="url(#tower)" />
          <path d="M422 402l56-26v90l-56 26z" fill="#173f97" />
          <path d="M240 440l54-26v88c-25-8-45-28-54-62z" fill="#173f97" />
        </svg>
        <div>
          <BrandName>土木工程网</BrandName>
          <BrandUrl href="#">www.civilcn.com</BrandUrl>
        </div>
      </BrandCard>
    </Shell>
  );
}
